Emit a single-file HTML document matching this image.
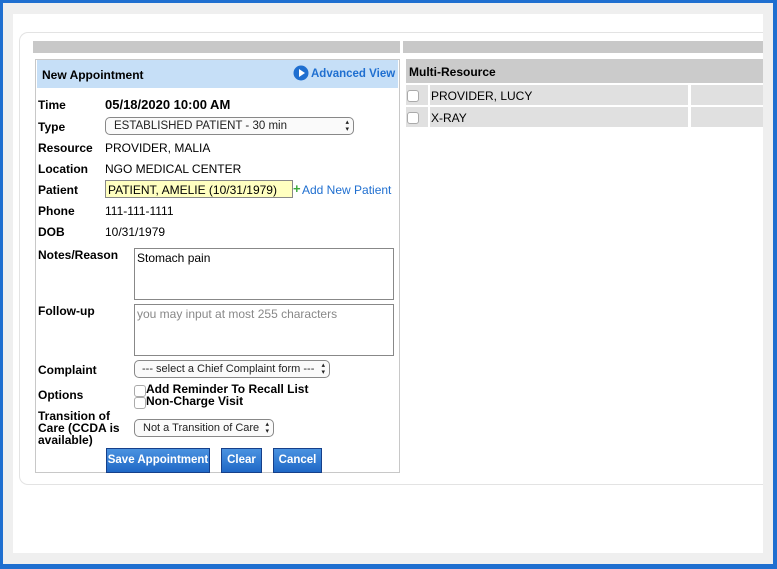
<!DOCTYPE html>
<html><head><style>
*{box-sizing:border-box;margin:0;padding:0}
body{width:777px;height:569px;overflow:hidden;background:#1f6fd0;font-family:"Liberation Sans",Arial,sans-serif;font-size:12px;color:#000;position:relative}
.a{position:absolute}
.lbl{position:absolute;left:38px;font-weight:bold;font-size:12px}
.val{position:absolute;left:105px;font-size:12px}
.sel{position:absolute;border:1px solid #888;border-radius:5px;background:#fafafa;font-size:11.5px;color:#222;padding:2px 0 0 8px;height:18px;white-space:nowrap;overflow:hidden}
.sel:after{content:"\25B4\A\25BE";white-space:pre;position:absolute;right:4px;top:1px;font-size:7px;line-height:7px;background:#fafafa}
.ta{position:absolute;left:134px;width:260px;height:52px;border:1px solid #888;background:#fff;padding:2px 2px;font-size:12px}
.btn{position:absolute;top:448px;height:25px;background:linear-gradient(#4a92e0,#1f68c6);border:1px solid #16408a;color:#fff;font-weight:bold;font-size:11.5px;text-align:center;line-height:23px}
.cb{position:absolute;width:12px;height:12px;border:1px solid #aaa;border-radius:3px;background:#fff}
</style></head><body>
<div class="a" style="left:3px;top:3px;width:770px;height:561px;background:#efefef"></div>
<div class="a" style="left:13px;top:14px;width:750px;height:539px;background:#fff"></div>
<div class="a" style="left:19px;top:32px;width:744px;height:453px;border:1px solid #e3e3e3;border-right:none;border-radius:9px 0 0 9px"></div>
<div class="a" style="left:33px;top:41px;width:367px;height:12px;background:#c8c8c8"></div>
<div class="a" style="left:403px;top:41px;width:360px;height:12px;background:#c8c8c8"></div>
<div class="a" style="left:35px;top:59px;width:365px;height:414px;border:1px solid #c8c8c8;background:#fff"></div>
<div class="a" style="left:37px;top:60px;width:361px;height:28px;background:#c6dff7"></div>
<div class="a" style="left:42px;top:68px;font-weight:bold;font-size:12px">New Appointment</div>
<svg class="a" style="left:293px;top:65px" width="16" height="16" viewBox="0 0 16 16"><circle cx="8" cy="8" r="7.5" fill="#1f6fd0"/><path d="M6 4 L12 8 L6 12 Z" fill="#fff"/></svg>
<div class="a" style="left:311px;top:68px;font-weight:bold;color:#1f6fd0;font-size:11.5px;line-height:13px;white-space:nowrap">Advanced View</div>
<div class="lbl" style="top:98px">Time</div><div class="val" style="top:97px;font-weight:bold;font-size:13px">05/18/2020 10:00 AM</div>
<div class="lbl" style="top:120px">Type</div><div class="sel" style="left:105px;top:117px;width:249px">ESTABLISHED PATIENT - 30 min</div>
<div class="lbl" style="top:141px">Resource</div><div class="val" style="top:141px">PROVIDER, MALIA</div>
<div class="lbl" style="top:162px">Location</div><div class="val" style="top:162px">NGO MEDICAL CENTER</div>
<div class="lbl" style="top:183px">Patient</div>
<div class="a" style="left:105px;top:180px;width:188px;height:18px;background:#ffffc0;border:1px solid #888;padding:2px 0 0 2px;font-size:12px">PATIENT, AMELIE (10/31/1979)</div>
<div class="a" style="left:293px;top:182px;color:#3aa83a;font-weight:bold;font-size:13px;line-height:13px">+</div>
<div class="a" style="left:302px;top:183px;color:#1f6fd0">Add New Patient</div>
<div class="lbl" style="top:204px">Phone</div><div class="val" style="top:204px">111-111-1111</div>
<div class="lbl" style="top:225px">DOB</div><div class="val" style="top:225px">10/31/1979</div>
<div class="lbl" style="top:248px">Notes/Reason</div><div class="ta" style="top:248px">Stomach pain</div>
<div class="lbl" style="top:304px">Follow-up</div><div class="ta" style="top:304px;color:#888">you may input at most 255 characters</div>
<div class="lbl" style="top:363px">Complaint</div><div class="sel" style="left:134px;top:360px;width:196px;padding-left:7px;font-size:11px">--- select a Chief Complaint form ---</div>
<div class="lbl" style="top:388px">Options</div>
<div class="cb" style="left:134px;top:385px"></div><div class="a" style="left:146px;top:382px;font-weight:bold">Add Reminder To Recall List</div>
<div class="cb" style="left:134px;top:397px"></div><div class="a" style="left:146px;top:394px;font-weight:bold">Non-Charge Visit</div>
<div class="lbl" style="top:410px;line-height:12px">Transition of<br>Care (CCDA is<br>available)</div>
<div class="sel" style="left:134px;top:419px;width:140px;font-size:11px">Not a Transition of Care</div>
<div class="btn" style="left:106px;width:104px">Save Appointment</div>
<div class="btn" style="left:221px;width:41px">Clear</div>
<div class="btn" style="left:273px;width:49px">Cancel</div>
<div class="a" style="left:406px;top:59px;width:357px;height:24px;background:#cbcbcb"></div>
<div class="a" style="left:409px;top:65px;font-weight:bold">Multi-Resource</div>
<div class="a" style="left:406px;top:85px;width:22px;height:20px;background:#e0e0e0"></div>
<div class="a" style="left:430px;top:85px;width:258px;height:20px;background:#e0e0e0"></div>
<div class="a" style="left:691px;top:85px;width:72px;height:20px;background:#e0e0e0"></div>
<div class="a" style="left:406px;top:107px;width:22px;height:20px;background:#e0e0e0"></div>
<div class="a" style="left:430px;top:107px;width:258px;height:20px;background:#e0e0e0"></div>
<div class="a" style="left:691px;top:107px;width:72px;height:20px;background:#e0e0e0"></div>
<div class="cb" style="left:407px;top:90px"></div><div class="cb" style="left:407px;top:112px"></div>
<div class="a" style="left:431px;top:89px">PROVIDER, LUCY</div>
<div class="a" style="left:431px;top:111px">X-RAY</div>
</body></html>
